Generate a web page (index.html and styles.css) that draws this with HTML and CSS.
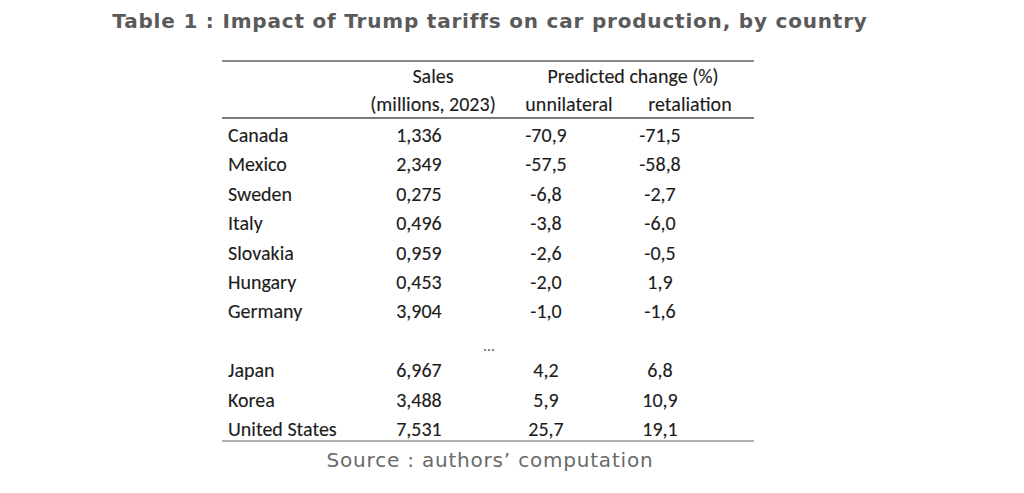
FILE: index.html
```html
<!DOCTYPE html>
<html>
<head>
<meta charset="utf-8">
<link rel="stylesheet" href="styles.css">
</head>
<body>
<div class="page">
  <h1 class="title">Table 1 : Impact of Trump tariffs on car production, by country</h1>
  <div class="tbl">
    <div class="head">
      <div class="h-row">
        <span></span><span class="c">Sales</span><span class="c span2">Predicted change (%)</span>
      </div>
      <div class="h-row second">
        <span></span><span class="c">(millions, 2023)</span><span class="c">unnilateral</span><span class="c">retaliation</span>
      </div>
    </div>
    <div class="body">
      <div class="row"><span class="name">Canada</span><span class="v">1,336</span><span class="v">-70,9</span><span class="v">-71,5</span></div>
      <div class="row"><span class="name">Mexico</span><span class="v">2,349</span><span class="v">-57,5</span><span class="v">-58,8</span></div>
      <div class="row"><span class="name">Sweden</span><span class="v">0,275</span><span class="v">-6,8</span><span class="v">-2,7</span></div>
      <div class="row"><span class="name">Italy</span><span class="v">0,496</span><span class="v">-3,8</span><span class="v">-6,0</span></div>
      <div class="row"><span class="name">Slovakia</span><span class="v">0,959</span><span class="v">-2,6</span><span class="v">-0,5</span></div>
      <div class="row"><span class="name">Hungary</span><span class="v">0,453</span><span class="v">-2,0</span><span class="v">1,9</span></div>
      <div class="row"><span class="name">Germany</span><span class="v">3,904</span><span class="v">-1,0</span><span class="v">-1,6</span></div>
      <div class="row dots"><span></span><span class="dot">…</span><span></span><span></span></div>
      <div class="row"><span class="name">Japan</span><span class="v">6,967</span><span class="v">4,2</span><span class="v">6,8</span></div>
      <div class="row"><span class="name">Korea</span><span class="v">3,488</span><span class="v">5,9</span><span class="v">10,9</span></div>
      <div class="row last"><span class="name">United States</span><span class="v">7,531</span><span class="v">25,7</span><span class="v">19,1</span></div>
    </div>
  </div>
  <p class="source">Source : authors’ computation</p>
</div>
</body>
</html>
```
FILE: styles.css
```css
html, body {
  margin: 0;
  padding: 0;
  background: #ffffff;
}
.page {
  width: 980px;
  display: flex;
  flex-direction: column;
  align-items: center;
}
.title {
  margin: 10px 0 0 0;
  font-family: "DejaVu Sans", Verdana, sans-serif;
  font-weight: bold;
  font-size: 20px;
  letter-spacing: 0.8px;
  line-height: 22px;
  color: #5a5a5a;
  text-align: center;
}
.tbl {
  margin-top: 28px;
  width: 532px;
  margin-left: -4px;
  font-family: "Carlito", "Lato", sans-serif;
  font-size: 20px;
  color: #1c1c1c;
  -webkit-text-stroke: 0.12px #1c1c1c;
}
.head {
  border-top: 2px solid #8a8a8a;
  border-bottom: 2px solid #7a7a7a;
}
.h-row {
  display: grid;
  grid-template-columns: 132px 158px 114px 128px;
  height: 27.5px;
  box-sizing: border-box;
  align-items: center;
}
.h-row.second { padding-top: 2px; }
.h-row .c { text-align: center; }
.h-row .span2 { grid-column: 3 / span 2; }
.body { padding-top: 2px; }
.row {
  display: grid;
  grid-template-columns: 147px 100px 154px 74px 57px;
  height: 29.4px;
  line-height: 29.4px;
  align-items: start;
}
.row.last {
  border-bottom: 2px solid #b0b0b0;
  height: 25px;
}
.name { padding-left: 6px; }
.v { text-align: center; }
.dot {
  grid-column: 2 / span 2;
  text-align: center;
  padding-right: 14px;
  padding-top: 4px;
  color: #666;
  -webkit-text-stroke: 0;
  font-size: 16px;
}
.source {
  margin: 7px 0 0 0;
  font-family: "DejaVu Sans", Verdana, sans-serif;
  font-size: 20px;
  letter-spacing: 0.8px;
  line-height: 22px;
  color: #6a6a6a;
  text-align: center;
}
```
